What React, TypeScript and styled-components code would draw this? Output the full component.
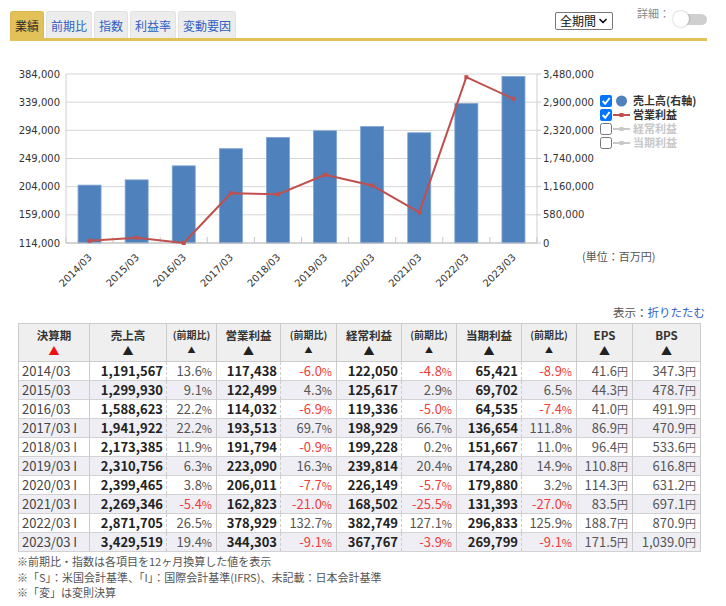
import React from "react";
import styled, { createGlobalStyle } from "styled-components";
import { ChevronDown } from "lucide-react";

const GlobalStyle = createGlobalStyle`
  html, body { margin: 0; padding: 0; background: #fff; }
  body {
    font-family: "Noto Sans CJK JP", "Noto Sans", sans-serif;
    color: #333;
  }
`;

const Page = styled.div`
  width: 726px;
  height: 606px;
  overflow: hidden;
`;

/* ---------- header ---------- */
const Header = styled.div`
  display: flex;
  align-items: flex-start;
  margin: 0 19px 0 10px;
  padding-top: 6px;
  border-bottom: 3px solid #e2c158;
`;

const Tabs = styled.div`
  display: flex;
  gap: 2px;
  margin-top: 5px;
`;

const Tab = styled.div<{ $active?: boolean }>`
  height: 27px;
  padding: 0 4px;
  display: flex;
  align-items: center;
  font-size: 12px;
  border-radius: 3px 3px 0 0;
  box-sizing: border-box;
  background: ${(p) => (p.$active ? "#e2c158" : "#ececec")};
  color: ${(p) => (p.$active ? "#2a2a2a" : "#2f5fc4")};
  border: 1px solid ${(p) => (p.$active ? "#dcb94c" : "#e2e2e2")};
  border-bottom: none;
`;

const RightTools = styled.div`
  margin-left: auto;
  display: flex;
  align-items: flex-start;
`;

const SelectBox = styled.label`
  margin-top: 6px;
  display: flex;
  align-items: center;
  width: 58px;
  height: 18px;
  box-sizing: border-box;
  border: 1px solid #767676;
  border-radius: 2px;
  padding: 0 3px 0 4px;
  background: #fff;
  color: #111;
`;

const PeriodSelect = styled.select`
  appearance: none;
  -webkit-appearance: none;
  border: none;
  outline: none;
  background: transparent;
  flex: 1;
  min-width: 0;
  padding: 0;
  font-family: "Noto Sans CJK JP", sans-serif;
  font-size: 12px;
  line-height: 16px;
  color: #111;
`;

const DetailGroup = styled.div`
  margin-left: 24px;
  display: flex;
  align-items: center;
  height: 14px;
`;

const DetailLabel = styled.span`
  font-size: 11px;
  color: #8a8a8a;
  line-height: 14px;
`;

const Switch = styled.span`
  position: relative;
  display: inline-block;
  width: 31px;
  height: 11px;
  margin-left: 6px;
  margin-top: 13px;
  border-radius: 6px;
  background: #cfcfcf;
`;

const Knob = styled.span`
  position: absolute;
  left: -3px;
  top: -3px;
  width: 16px;
  height: 16px;
  border-radius: 50%;
  background: #fff;
  box-shadow: 0 0 2px rgba(0, 0, 0, 0.35);
`;

/* ---------- chart ---------- */
const ChartSvg = styled.svg`
  display: block;
`;

const X0 = 66;
const X1 = 537;
const YT = 74;
const YB = 243;
const CW = (X1 - X0) / 10;

const years = ["2014/03", "2015/03", "2016/03", "2017/03", "2018/03", "2019/03", "2020/03", "2021/03", "2022/03", "2023/03"];
const sales = [1191567, 1299930, 1588623, 1941922, 2173385, 2310756, 2399465, 2269346, 2871705, 3429519];
const op = [117438, 122499, 114032, 193513, 191794, 223090, 206011, 162823, 378929, 344303];
const leftTicks = ["384,000", "339,000", "294,000", "249,000", "204,000", "159,000", "114,000"];
const rightTicks = ["3,480,000", "2,900,000", "2,320,000", "1,740,000", "1,160,000", "580,000", "0"];

const yL = (v: number) => YB - ((v - 114000) / 270000) * (YB - YT);
const yR = (v: number) => YB - (v / 3480000) * (YB - YT);
const cx = (i: number) => X0 + i * CW + CW / 2;

const axisFont = { fontFamily: "DejaVu Sans, sans-serif", fontSize: 10, fill: "#333" } as const;
const jpFont = { fontFamily: "Noto Sans CJK JP, sans-serif" } as const;

function Checkbox({ y, checked }: { y: number; checked: boolean }) {
  if (checked) {
    return (
      <g>
        <rect x={600} y={y - 6} width={12} height={12} rx={2} fill="#0075ff" />
        <path d={`M602.6 ${y} L605.2 ${y + 2.8} L609.6 ${y - 3}`} stroke="#fff" strokeWidth={2} fill="none" />
      </g>
    );
  }
  return <rect x={600.5} y={y - 5.5} width={11} height={11} rx={2} fill="#fff" stroke="#767676" strokeWidth={1} />;
}

function Chart() {
  const gridYs = leftTicks.map((_, i) => YT + (i * (YB - YT)) / 6);
  const linePts = op.map((v, i) => `${cx(i)},${yL(v)}`).join(" ");
  const legend = [
    { label: "売上高(右軸)", on: true, kind: "bar" },
    { label: "営業利益", on: true, kind: "line" },
    { label: "経常利益", on: false, kind: "line" },
    { label: "当期利益", on: false, kind: "line" },
  ];
  const legendYs = [101, 115, 129, 143];
  return (
    <ChartSvg width={726} height={262} viewBox="0 41 726 262">
      {gridYs.map((y, i) => (
        <line key={"g" + i} x1={X0} x2={X1} y1={y} y2={y} stroke="#d6d6d6" strokeWidth={1} />
      ))}
      {gridYs.map((y, i) => (
        <line key={"rt" + i} x1={X1} x2={X1 + 4} y1={y} y2={y} stroke="#c8c8c8" strokeWidth={1} />
      ))}
      <line x1={X0} x2={X0} y1={YT} y2={YB} stroke="#cfcfcf" />
      <line x1={X1} x2={X1} y1={YT} y2={YB} stroke="#cfcfcf" />
      {Array.from({ length: 11 }).map((_, i) => (
        <line key={"xt" + i} x1={X0 + i * CW} x2={X0 + i * CW} y1={YB - 6} y2={YB} stroke="#c8c8c8" />
      ))}
      {leftTicks.map((t, i) => (
        <text key={"lt" + i} x={60} y={gridYs[i] + 3.6} textAnchor="end" style={axisFont}>
          {t}
        </text>
      ))}
      {rightTicks.map((t, i) => (
        <text key={"rtl" + i} x={543} y={gridYs[i] + 3.6} textAnchor="start" style={axisFont}>
          {t}
        </text>
      ))}
      {sales.map((v, i) => (
        <rect
          key={"b" + i}
          x={cx(i) - 11.5}
          y={yR(v)}
          width={23}
          height={YB - yR(v)}
          fill="#4f81bd"
          stroke="#7fa3d2"
          strokeWidth={0.8}
        />
      ))}
      <line x1={X0} x2={X1} y1={YB} y2={YB} stroke="#bdbdbd" />
      <polyline points={linePts} fill="none" stroke="#c0504d" strokeWidth={2} strokeLinejoin="round" />
      {op.map((v, i) => (
        <rect key={"m" + i} x={cx(i) - 2} y={yL(v) - 2} width={4} height={4} fill="#c0504d" />
      ))}
      {years.map((y, i) => (
        <text
          key={"x" + i}
          transform={`translate(${cx(i) + 3}, 258) rotate(-45)`}
          textAnchor="end"
          style={axisFont}
        >
          {y}
        </text>
      ))}
      {legend.map((l, i) => {
        const y = legendYs[i];
        const col = l.on ? (i === 0 ? "#4f81bd" : "#c0504d") : "#c8c8c8";
        return (
          <g key={"lg" + i}>
            <Checkbox y={y} checked={l.on} />
            {l.kind === "bar" ? (
              <circle cx={621.5} cy={y} r={5.5} fill={col} />
            ) : (
              <g>
                <line x1={613} x2={630} y1={y} y2={y} stroke={col} strokeWidth={2} />
                <rect x={619.5} y={y - 2} width={4} height={4} fill={col} />
              </g>
            )}
            <text x={633} y={y + 4} style={{ ...jpFont, fontSize: 11, fontWeight: 700, fill: l.on ? "#333" : "#c8c8c8" }}>
              {l.label}
            </text>
          </g>
        );
      })}
      <text x={582} y={261} style={{ ...jpFont, fontSize: 11, fill: "#555" }}>
        (単位：百万円)
      </text>
    </ChartSvg>
  );
}

/* ---------- table ---------- */
const ShowRow = styled.div`
  height: 20px;
  display: flex;
  justify-content: flex-end;
  align-items: flex-start;
  padding-right: 21px;
  font-size: 11.5px;
  line-height: 18px;
  color: #555;
`;

const Link = styled.span`
  color: #2e62c9;
`;

const Table = styled.table`
  margin-left: 18px;
  width: 682px;
  border-collapse: collapse;
  table-layout: fixed;
  font-family: "Noto Sans CJK JP", sans-serif;
`;

const HeadCell = styled.th`
  background: #efefef;
  border: 1px solid #cccccc;
  height: 38px;
  padding: 3px 0 0;
  box-sizing: border-box;
  vertical-align: top;
  text-align: center;
  color: #333;
`;

const HeadLabel = styled.span<{ $sub?: boolean }>`
  display: block;
  font-size: ${(p) => (p.$sub ? "10px" : "11.5px")};
  font-weight: 700;
  line-height: 16px;
`;

const SortArrow = styled.span<{ $sub?: boolean; $active?: boolean }>`
  display: block;
  font-size: ${(p) => (p.$sub ? "8px" : "11px")};
  line-height: 14px;
  color: ${(p) => (p.$active ? "#ee1111" : "#222")};
`;

const Row = styled.tr<{ $alt?: boolean }>`
  background: ${(p) => (p.$alt ? "#eeeef4" : "#ffffff")};
`;

type Kind = "date" | "value" | "ratio" | "plain";

const Cell = styled.td<{ $kind: Kind; $neg?: boolean }>`
  height: 18px;
  padding: 0 ${(p) => (p.$kind === "value" ? "3px" : "4px")} 0 ${(p) => (p.$kind === "date" ? "3px" : "0")};
  line-height: 18px;
  font-size: 13px;
  white-space: nowrap;
  border-top: 1px solid #d2d2d2;
  border-bottom: 1px solid #d2d2d2;
  border-left: 1px ${(p) => (p.$kind === "ratio" ? "dashed" : "solid")} #cccccc;
  border-right: 1px ${(p) => (p.$kind === "value" ? "dashed" : "solid")} #cccccc;
  text-align: ${(p) => (p.$kind === "date" ? "left" : "right")};
  font-weight: ${(p) => (p.$kind === "value" ? 700 : 400)};
  color: ${(p) =>
    p.$neg ? "#f23a3a" : p.$kind === "value" ? "#222" : p.$kind === "date" ? "#444" : "#555"};
`;

const Unit = styled.span`
  font-size: 11px;
`;

const Notes = styled.div`
  margin: 2px 0 0 17px;
  font-size: 11px;
  line-height: 15.5px;
  color: #555;
`;

const colWidths = [71, 77, 50, 64, 56, 65, 55, 65, 55, 56, 68];

const heads: { label: string; sub?: boolean; active?: boolean }[] = [
  { label: "決算期", active: true },
  { label: "売上高" },
  { label: "(前期比)", sub: true },
  { label: "営業利益" },
  { label: "(前期比)", sub: true },
  { label: "経常利益" },
  { label: "(前期比)", sub: true },
  { label: "当期利益" },
  { label: "(前期比)", sub: true },
  { label: "EPS" },
  { label: "BPS" },
];

const rows: string[][] = [
  ["2014/03", "1,191,567", "13.6", "117,438", "-6.0", "122,050", "-4.8", "65,421", "-8.9", "41.6", "347.3"],
  ["2015/03", "1,299,930", "9.1", "122,499", "4.3", "125,617", "2.9", "69,702", "6.5", "44.3", "478.7"],
  ["2016/03", "1,588,623", "22.2", "114,032", "-6.9", "119,336", "-5.0", "64,535", "-7.4", "41.0", "491.9"],
  ["2017/03 I", "1,941,922", "22.2", "193,513", "69.7", "198,929", "66.7", "136,654", "111.8", "86.9", "470.9"],
  ["2018/03 I", "2,173,385", "11.9", "191,794", "-0.9", "199,228", "0.2", "151,667", "11.0", "96.4", "533.6"],
  ["2019/03 I", "2,310,756", "6.3", "223,090", "16.3", "239,814", "20.4", "174,280", "14.9", "110.8", "616.8"],
  ["2020/03 I", "2,399,465", "3.8", "206,011", "-7.7", "226,149", "-5.7", "179,880", "3.2", "114.3", "631.2"],
  ["2021/03 I", "2,269,346", "-5.4", "162,823", "-21.0", "168,502", "-25.5", "131,393", "-27.0", "83.5", "697.1"],
  ["2022/03 I", "2,871,705", "26.5", "378,929", "132.7", "382,749", "127.1", "296,833", "125.9", "188.7", "870.9"],
  ["2023/03 I", "3,429,519", "19.4", "344,303", "-9.1", "367,767", "-3.9", "269,799", "-9.1", "171.5", "1,039.0"],
];

const kindOf = (c: number): Kind => {
  if (c === 0) return "date";
  if (c >= 9) return "plain";
  return c % 2 === 1 ? "value" : "ratio";
};

function DataTable() {
  return (
    <Table>
      <colgroup>
        {colWidths.map((w, i) => (
          <col key={i} style={{ width: w }} />
        ))}
      </colgroup>
      <thead>
        <tr>
          {heads.map((h, i) => (
            <HeadCell key={i}>
              <HeadLabel $sub={h.sub}>{h.label}</HeadLabel>
              <SortArrow $sub={h.sub} $active={h.active}>
                ▲
              </SortArrow>
            </HeadCell>
          ))}
        </tr>
      </thead>
      <tbody>
        {rows.map((r, ri) => (
          <Row key={ri} $alt={ri % 2 === 1}>
            {r.map((v, c) => {
              const k = kindOf(c);
              const neg = k === "ratio" && v.startsWith("-");
              return (
                <Cell key={c} $kind={k} $neg={neg}>
                  {v}
                  {k === "ratio" && <Unit>%</Unit>}
                  {k === "plain" && <Unit>円</Unit>}
                </Cell>
              );
            })}
          </Row>
        ))}
      </tbody>
    </Table>
  );
}

export default function App() {
  return (
    <Page>
      <GlobalStyle />
      <Header>
        <Tabs>
          <Tab $active>業績</Tab>
          <Tab>前期比</Tab>
          <Tab>指数</Tab>
          <Tab>利益率</Tab>
          <Tab>変動要因</Tab>
        </Tabs>
        <RightTools>
          <SelectBox>
            <PeriodSelect defaultValue="all">
              <option value="all">全期間</option>
            </PeriodSelect>
            <ChevronDown size={12} strokeWidth={3.5} color="#111" />
          </SelectBox>
          <DetailGroup>
            <DetailLabel>詳細：</DetailLabel>
            <Switch>
              <Knob />
            </Switch>
          </DetailGroup>
        </RightTools>
      </Header>
      <Chart />
      <ShowRow>
        表示：<Link>折りたたむ</Link>
      </ShowRow>
      <DataTable />
      <Notes>
        <div>※前期比・指数は各項目を12ヶ月換算した値を表示</div>
        <div>※「S」：米国会計基準、「I」：国際会計基準(IFRS)、未記載：日本会計基準</div>
        <div>※「変」は変則決算</div>
      </Notes>
    </Page>
  );
}
